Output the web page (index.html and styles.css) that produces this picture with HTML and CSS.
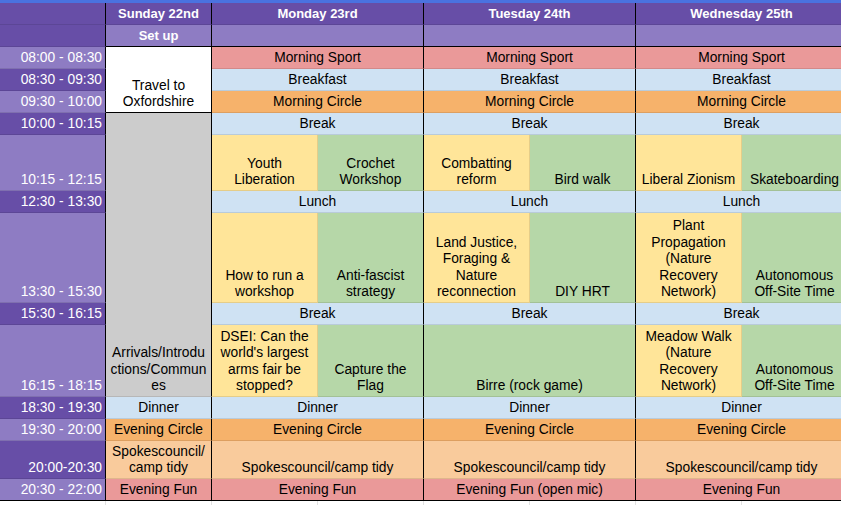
FILE: index.html
```html
<!DOCTYPE html>
<html>
<head>
<meta charset="utf-8">
<link rel="stylesheet" href="styles.css">
</head>
<body>
<div class="topbar"></div>
<div class="sheet">
  <!-- header -->
  <div class="t td"></div>
  <div class="c hd">Sunday 22nd</div>
  <div class="c hd s2">Monday 23rd</div>
  <div class="c hd s2">Tuesday 24th</div>
  <div class="c hd s2">Wednesday 25th</div>
  <!-- set up -->
  <div class="t td"></div>
  <div class="c su bb">Set up</div>
  <div class="c su s2 bb"></div>
  <div class="c su s2 bb"></div>
  <div class="c su s2 bb"></div>
  <!-- 08:00 -->
  <div class="t tl">08:00 - 08:30</div>
  <div class="c white r3 bb">Travel to<br>Oxfordshire</div>
  <div class="c red s2">Morning Sport</div>
  <div class="c red s2">Morning Sport</div>
  <div class="c red s2">Morning Sport</div>
  <!-- 08:30 -->
  <div class="t td">08:30 - 09:30</div>
  <div class="c blue s2">Breakfast</div>
  <div class="c blue s2">Breakfast</div>
  <div class="c blue s2">Breakfast</div>
  <!-- 09:30 -->
  <div class="t tl">09:30 - 10:00</div>
  <div class="c orange s2">Morning Circle</div>
  <div class="c orange s2">Morning Circle</div>
  <div class="c orange s2">Morning Circle</div>
  <!-- 10:00 -->
  <div class="t td">10:00 - 10:15</div>
  <div class="c gray r6">Arrivals/Introdu<br>ctions/Commun<br>es</div>
  <div class="c blue s2">Break</div>
  <div class="c blue s2">Break</div>
  <div class="c blue s2">Break</div>
  <!-- 10:15 -->
  <div class="t tl">10:15 - 12:15</div>
  <div class="c yellow a">Youth<br>Liberation</div>
  <div class="c green">Crochet<br>Workshop</div>
  <div class="c yellow a">Combatting<br>reform</div>
  <div class="c green">Bird walk</div>
  <div class="c yellow a">Liberal Zionism</div>
  <div class="c green">Skateboarding</div>
  <!-- 12:30 -->
  <div class="t td">12:30 - 13:30</div>
  <div class="c blue s2">Lunch</div>
  <div class="c blue s2">Lunch</div>
  <div class="c blue s2">Lunch</div>
  <!-- 13:30 -->
  <div class="t tl">13:30 - 15:30</div>
  <div class="c yellow a">How to run a<br>workshop</div>
  <div class="c green">Anti-fascist<br>strategy</div>
  <div class="c yellow a">Land Justice,<br>Foraging &amp;<br>Nature<br>reconnection</div>
  <div class="c green">DIY HRT</div>
  <div class="c yellow a">Plant<br>Propagation<br>(Nature<br>Recovery<br>Network)</div>
  <div class="c green">Autonomous<br>Off-Site Time</div>
  <!-- 15:30 -->
  <div class="t td">15:30 - 16:15</div>
  <div class="c blue s2">Break</div>
  <div class="c blue s2">Break</div>
  <div class="c blue s2">Break</div>
  <!-- 16:15 -->
  <div class="t tl">16:15 - 18:15</div>
  <div class="c yellow a">DSEI: Can the<br>world's largest<br>arms fair be<br>stopped?</div>
  <div class="c green">Capture the<br>Flag</div>
  <div class="c green s2">Birre (rock game)</div>
  <div class="c yellow a">Meadow Walk<br>(Nature<br>Recovery<br>Network)</div>
  <div class="c green">Autonomous<br>Off-Site Time</div>
  <!-- 18:30 -->
  <div class="t td">18:30 - 19:30</div>
  <div class="c blue">Dinner</div>
  <div class="c blue s2">Dinner</div>
  <div class="c blue s2">Dinner</div>
  <div class="c blue s2">Dinner</div>
  <!-- 19:30 -->
  <div class="t tl">19:30 - 20:00</div>
  <div class="c orange">Evening Circle</div>
  <div class="c orange s2">Evening Circle</div>
  <div class="c orange s2">Evening Circle</div>
  <div class="c orange s2">Evening Circle</div>
  <!-- 20:00 -->
  <div class="t td">20:00-20:30</div>
  <div class="c peach">Spokescouncil/<br>camp tidy</div>
  <div class="c peach s2">Spokescouncil/camp tidy</div>
  <div class="c peach s2">Spokescouncil/camp tidy</div>
  <div class="c peach s2">Spokescouncil/camp tidy</div>
  <!-- 20:30 -->
  <div class="t tl bb">20:30 - 22:00</div>
  <div class="c red bb">Evening Fun</div>
  <div class="c red s2 bb">Evening Fun</div>
  <div class="c red s2 bb">Evening Fun (open mic)</div>
  <div class="c red s2 bb">Evening Fun</div>
  <!-- blank row -->
  <div class="e"></div><div class="e"></div><div class="e"></div><div class="e"></div>
  <div class="e"></div><div class="e"></div><div class="e"></div><div class="e"></div>
</div>
</body>
</html>
```

FILE: styles.css
```css
html, body {
  margin: 0;
  padding: 0;
  background: #ffffff;
  overflow: hidden;
}
body {
  width: 841px;
  height: 505px;
  font-family: "Liberation Sans", Arial, sans-serif;
  font-size: 13.8px;
  line-height: 16.6px;
  color: #000;
}
.topbar {
  height: 3px;
  background: #4a72e0;
}
.sheet {
  display: grid;
  width: 848px;
  grid-template-columns: repeat(8, 106px);
  grid-template-rows: 22px 22px 22px 22px 22px 22px 56px 22px 90px 22px 72px 22px 22px 38px 22px 12px;
}
.t, .c {
  box-sizing: border-box;
  border-right: 1px solid #000;
  border-bottom: 1px solid rgba(0, 0, 0, 0.1);
  display: flex;
  align-items: flex-end;
  padding: 0 2px 1px 2px;
  white-space: nowrap;
  overflow: hidden;
}
.c {
  justify-content: center;
  text-align: center;
}
.t {
  justify-content: flex-end;
  text-align: right;
  color: #ffffff;
  padding-right: 3px;
}
.td { background: #674ea7; }
.tl { background: #8e7cc3; }
.hd {
  background: #674ea7;
  color: #ffffff;
  font-weight: bold;
  font-size: 13px;
}
.su {
  background: #8e7cc3;
  color: #ffffff;
  font-weight: bold;
  font-size: 13px;
}
.s2 { grid-column: span 2; }
.r3 { grid-row: span 3; }
.r6 { grid-row: span 6; }
.a { border-right-color: rgba(0, 0, 0, 0.1); }
.bb { border-bottom-color: #000; }
.white { background: #ffffff; }
.red { background: #ea9999; }
.blue { background: #cfe2f3; }
.orange { background: #f6b26b; }
.peach { background: #f9cb9c; }
.yellow { background: #ffe599; }
.green { background: #b6d7a8; }
.gray { background: #cccccc; }
.e {
  border-right: 1px solid #e2e2e2;
}
```
